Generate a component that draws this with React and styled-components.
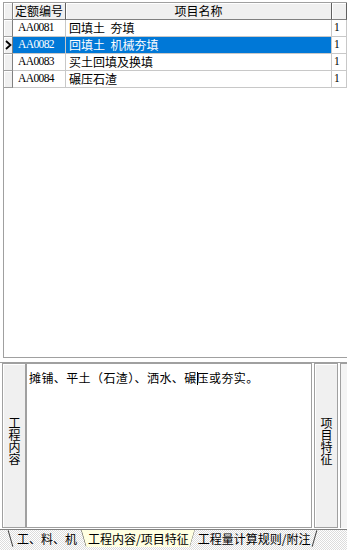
import React from "react";
import styled, { createGlobalStyle } from "styled-components";

const Global = createGlobalStyle`
  html, body { margin: 0; padding: 0; background: #ffffff; }
  body { font-family: "Noto Sans CJK SC", "Liberation Sans", sans-serif; font-size: 12px; color: #000; }
`;

const Page = styled.div`
  width: 347px;
  height: 550px;
  display: flex;
  flex-direction: column;
  overflow: hidden;
  background: #ffffff;
`;

const GridArea = styled.div`
  height: 356px;
  margin: 2px 0 0 3px;
  border-left: 1px solid #a0a0a0;
  border-top: 1px solid #a0a0a0;
  border-bottom: 1px solid #a0a0a0;
  background: #ffffff;
  display: flex;
  flex-direction: column;
  box-sizing: border-box;
`;

const Row = styled.div`
  display: grid;
  grid-template-columns: 9px 53px 266px 1fr;
  height: 17px;
  box-sizing: border-box;
`;

const Indicator = styled.div`
  background: #f0f0f0;
  border-right: 1px solid #808080;
  border-bottom: 1px solid #a0a0a0;
  box-shadow: inset 1px 1px 0 #ffffff;
  display: flex;
  align-items: center;
  justify-content: center;
`;

const HeadCell = styled.div`
  background: #f0f0f0;
  border-right: 1px solid #606060;
  border-bottom: 1px solid #808080;
  box-shadow: inset 1px 1px 0 #ffffff;
  display: flex;
  align-items: center;
  justify-content: center;
  line-height: 1;
  font-size: 12px;
  overflow: hidden;
  white-space: nowrap;
`;

const Cell = styled.div`
  border-right: 1px solid #c8c8c8;
  border-bottom: 1px solid #c8c8c8;
  background: ${(p) => (p.$sel ? "#0078d7" : "#ffffff")};
  color: ${(p) => (p.$sel ? "#ffffff" : "#000000")};
  display: flex;
  align-items: center;
  padding-left: ${(p) => p.$pad}px;
  overflow: hidden;
  white-space: pre;
  line-height: 1;
  font-family: ${(p) =>
    p.$code ? '"Liberation Serif", serif' : '"Noto Sans CJK SC", sans-serif'};
  font-size: ${(p) => (p.$code ? 11.5 : 12)}px;
  letter-spacing: ${(p) => (p.$code ? "-0.6px" : "0")};
`;

const Pointer = () => (
  <svg width="7" height="10" viewBox="0 0 7 10">
    <path d="M1 1 L5.5 5 L1 9" fill="none" stroke="#000" strokeWidth="1.8" />
  </svg>
);

const DetailPanel = styled.div`
  margin-top: 4px;
  height: 166px;
  display: flex;
  border-top: 1px solid #a0a0a0;
  box-sizing: border-box;
`;

const SideButton = styled.div`
  width: ${(p) => p.$w}px;
  margin-left: ${(p) => p.$ml || 0}px;
  background: #f0f0f0;
  border: 1px solid #a0a0a0;
  box-shadow: inset 1px 1px 0 #ffffff;
  box-sizing: border-box;
  display: flex;
  align-items: center;
  justify-content: center;
`;

const VerticalLabel = styled.span`
  writing-mode: vertical-rl;
  font-size: 12px;
  line-height: 1;
  margin-top: ${(p) => p.$mt || 0}px;
`;

const Memo = styled.div`
  flex: 1;
  background: #ffffff;
  border: 1px solid #a0a0a0;
  box-sizing: border-box;
  padding: 7px 2px 0 2px;
  font-size: 12px;
  line-height: 14px;
  letter-spacing: 0.4px;
  white-space: nowrap;
`;

const Caret = styled.span`
  display: inline-block;
  width: 1px;
  height: 13px;
  background: #000;
  vertical-align: -2px;
  margin-right: -1px;
`;

const EdgeStrip = styled.div`
  width: 6px;
  margin-left: 2px;
  border-left: 1px solid #a0a0a0;
  border-top: 1px solid #a0a0a0;
  background: #f4f4f4;
`;

const TabStrip = styled.div`
  flex: 1;
  margin-top: 1px;
  border-top: 1px solid #808080;
  background: repeating-conic-gradient(#ffffff 0 25%, #dcdcdc 0 50%) 0 0 / 2px 2px;
  display: flex;
  padding-left: 8px;
  align-items: flex-start;
`;

const Tab = styled.div`
  position: relative;
  height: 17px;
  padding: 0 ${(p) => p.$pr}px 0 ${(p) => p.$pl}px;
  display: flex;
  align-items: center;
  font-size: 12px;
  line-height: 1;
  white-space: nowrap;
  z-index: ${(p) => (p.$active ? 2 : 1)};
  background: ${(p) => (p.$active ? "#ffffe1" : "transparent")};
  clip-path: ${(p) =>
    p.$active ? "polygon(0 0, 100% 0, calc(100% - 5px) 100%, 5px 100%)" : "none"};
`;

const Slash = styled.span`
  position: absolute;
  top: 0;
  width: 1px;
  height: 17px;
  background: #404040;
  ${(p) => (p.$side === "left" ? "left: 2px;" : "right: 2px;")}
  transform: rotate(${(p) => (p.$dir === "back" ? "-16deg" : "16deg")});
`;

const rows = [
  { code: "AA0081", name: "回填土  夯填" },
  { code: "AA0082", name: "回填土  机械夯填", sel: true },
  { code: "AA0083", name: "买土回填及换填" },
  { code: "AA0084", name: "碾压石渣" },
];

export default function App() {
  return (
    <Page>
      <Global />
      <GridArea>
        <Row>
          <Indicator />
          <HeadCell>定额编号</HeadCell>
          <HeadCell>项目名称</HeadCell>
          <HeadCell />
        </Row>
        {rows.map((r) => (
          <Row key={r.code}>
            <Indicator>{r.sel && <Pointer />}</Indicator>
            <Cell $code $pad={5} $sel={r.sel}>
              {r.code}
            </Cell>
            <Cell $pad={3} $sel={r.sel}>
              {r.name}
            </Cell>
            <Cell $pad={2} $code>
              1
            </Cell>
          </Row>
        ))}
      </GridArea>
      <DetailPanel>
        <SideButton $w={24} $ml={2}>
          <VerticalLabel $mt={-10}>工程内容</VerticalLabel>
        </SideButton>
        <Memo>
          摊铺、平土（石渣）、洒水、碾<Caret />压或夯实。
        </Memo>
        <SideButton $w={24} $ml={2}>
          <VerticalLabel $mt={-10}>项目特征</VerticalLabel>
        </SideButton>
        <EdgeStrip />
      </DetailPanel>
      <TabStrip>
        <Tab $pl={9} $pr={4}>
          <Slash $side="left" $dir="back" />
          工、料、机
        </Tab>
        <Tab $active $pl={7} $pr={6}>
          <Slash $side="left" $dir="back" />
          工程内容/项目特征
          <Slash $side="right" $dir="fwd" />
        </Tab>
        <Tab $pl={3} $pr={7}>
          工程量计算规则/附注
          <Slash $side="right" $dir="fwd" />
        </Tab>
      </TabStrip>
    </Page>
  );
}
